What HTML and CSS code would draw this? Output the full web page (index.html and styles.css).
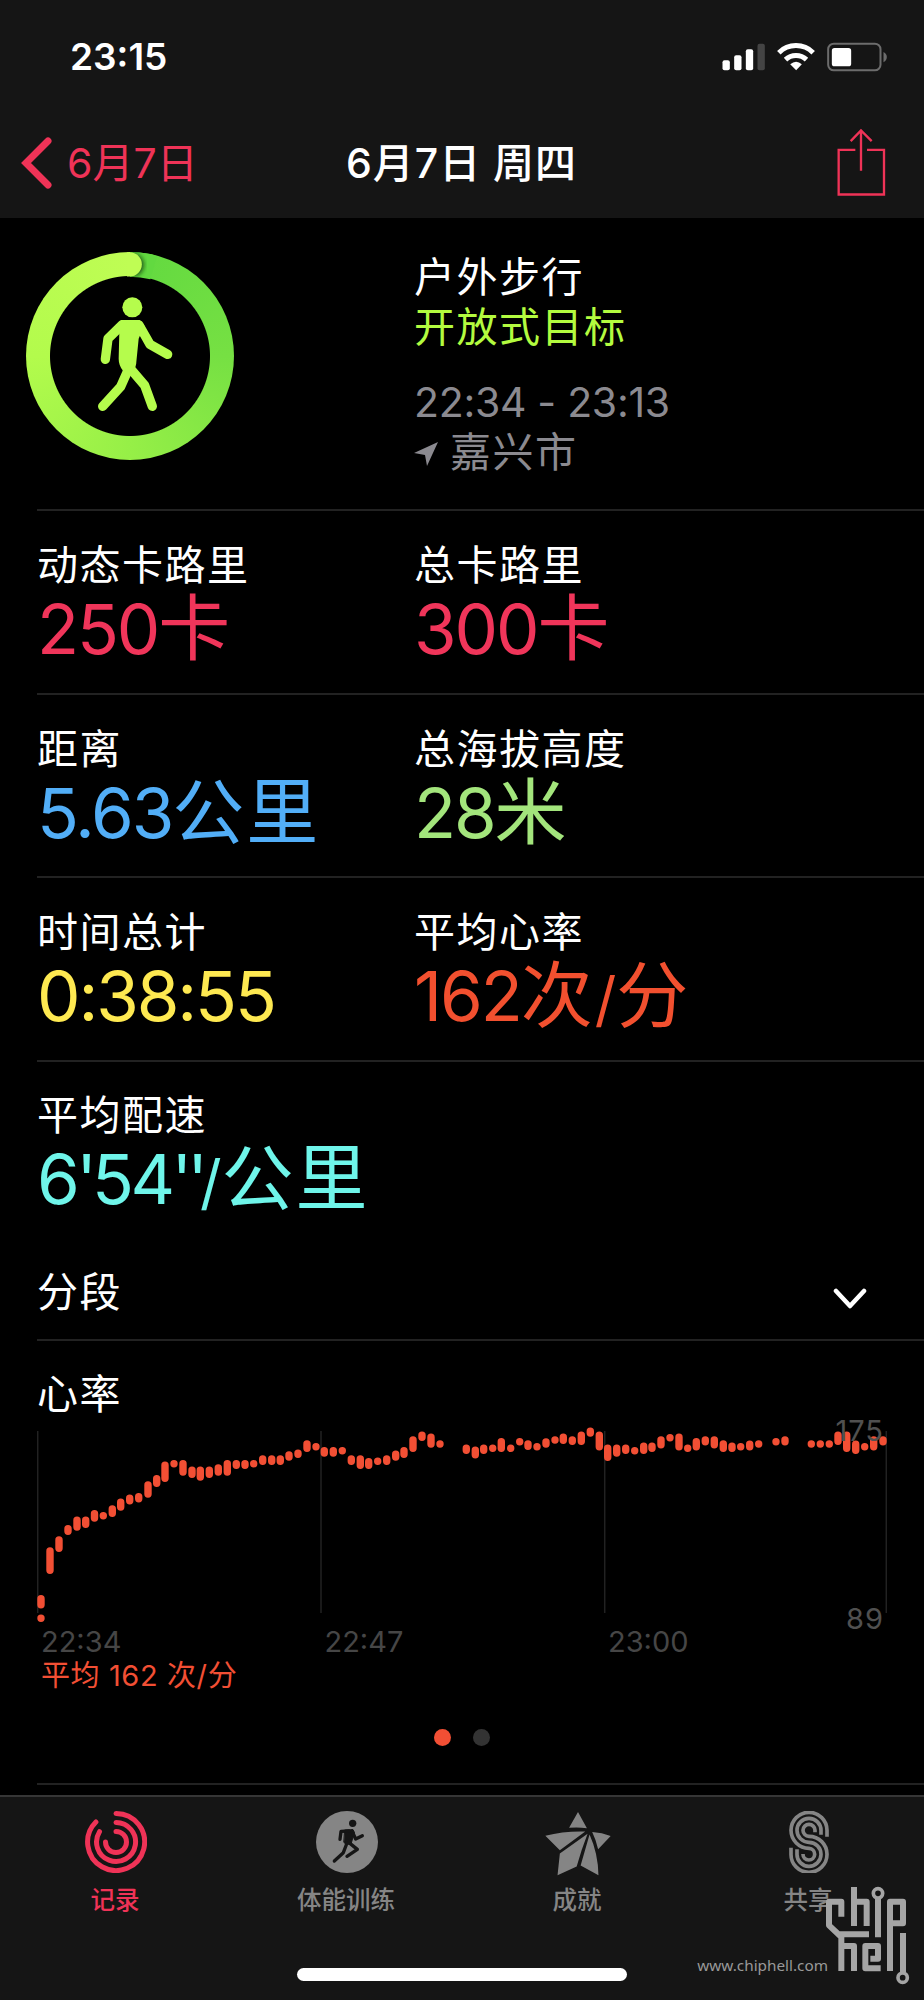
FILE: index.html
```
<!DOCTYPE html>
<html lang="zh-CN">
<head>
    <meta charset="UTF-8">
    <meta name="viewport" content="width=device-width, initial-scale=1.0">
    <title>6月7日 周四</title>
    <link rel="stylesheet" href="styles.css">
</head>
<body>
    <header class="header">
        <div class="status">
            <span class="clock">23:15</span>
            <svg class="status-icons" viewBox="780 125 500 90">
                <g fill="#fff">
                    <rect x="784" y="180" width="22" height="30" rx="6"/>
                    <rect x="819" y="165" width="22" height="45" rx="6"/>
                    <rect x="854" y="147" width="22" height="63" rx="6"/>
                    <rect x="889" y="130" width="22" height="80" rx="6" fill="#444"/>
                    <path d="M1005 210 L987 192 Q1005 177 1022 192 Z"/>
                    <rect x="1112" y="143" width="58" height="55" rx="8"/>
                </g>
                <path d="M953 157 A73 73 0 0 1 1056 157 M973 178 A46 46 0 0 1 1036 178" fill="none" stroke="#fff" stroke-width="15"/>
                <rect x="1101" y="130" width="157" height="80" rx="17" fill="none" stroke="#6c6c6c" stroke-width="6"/>
                <path d="M1267 155 Q1277 161 1277 170 Q1277 180 1267 186 Z" fill="#6c6c6c"/>
            </svg>
        </div>
        <nav class="nav">
            <a class="back">
                <svg class="back-icon" viewBox="0 0 32 54"><path d="M27 5 L5 27 L27 49"/></svg>
                <span>6月7日</span>
            </a>
            <h1 class="title">6月7日 周四</h1>
            <svg class="share" viewBox="1122 385 150 206">
                <path d="M1180 450 H1130 V584 H1266 V450 H1215 M1197 513 V392 M1166 424 L1197 392 L1229 424"/>
            </svg>
        </nav>
    </header>

    <main class="content">
        <section class="hero">
            <div class="ring">
                <svg class="ring-art" viewBox="77 80 624 624">
                    <defs>
                        <clipPath id="band"><path d="M389 80 H480 V180 L389 153 Z"/></clipPath>
                        <filter id="soft"><feGaussianBlur stdDeviation="6"/></filter>
                    </defs>
                    <path d="M389 81 Q440 81 470 92 L450 162 Q420 154 389 154 Z" fill="#62d940"/>
                    <g clip-path="url(#band)"><circle cx="396" cy="119" r="35" fill="#123c0c" opacity=".8" filter="url(#soft)"/></g>
                    <path d="M380 80.500 H388 A36.500 36.500 0 0 1 388 153.500 H380 Z" fill="#bffd54"/>
                    <g fill="#b5fc4c">
                        <circle cx="396" cy="246" r="30"/>
                        <path d="M362 284 H418 L432 300 L415 340 L408 410 Q408 425 398 436 H368 Q355 420 355 400 L357 320 Z"/>
                    </g>
                    <g class="limbs">
                        <path d="M366 298 L323 340 L315 402"/>
                        <path d="M416 299 L449 357 L502 387"/>
                        <path d="M384 432 L361 484 L307 543"/>
                        <path d="M390 430 L433 480 L456 543"/>
                    </g>
                </svg>
            </div>
            <div class="summary">
                <p>户外步行</p>
                <p class="goal">开放式目标</p>
                <p class="muted time">22:34 - 23:13</p>
                <p class="muted place">
                    <svg class="arrow" viewBox="0 0 24 24"><path d="M24 0 L0 11 L11 13 L13 24 Z"/></svg>
                    <span>嘉兴市</span>
                </p>
            </div>
        </section>

        <section class="row">
            <div class="stat pink"><h2>动态卡路里</h2><p><b>250</b>卡</p></div>
            <div class="stat pink"><h2>总卡路里</h2><p><b>300</b>卡</p></div>
        </section>
        <section class="row">
            <div class="stat blue"><h2>距离</h2><p><b>5.63</b>公里</p></div>
            <div class="stat green"><h2>总海拔高度</h2><p><b>28</b>米</p></div>
        </section>
        <section class="row">
            <div class="stat yellow"><h2>时间总计</h2><p><b>0:38:55</b></p></div>
            <div class="stat orange"><h2>平均心率</h2><p><b>162</b>次<b class="slash">/</b>分</p></div>
        </section>
        <section class="row last">
            <div class="stat cyan"><h2>平均配速</h2><p><b>6<b class="prime">'</b>54<b class="prime">''</b></b><b class="slash">/</b>公里</p></div>
        </section>

        <section class="segments">
            <h2>分段</h2>
            <svg class="chevron" viewBox="0 0 34 22"><path d="M3 3 L17 18 L31 3"/></svg>
        </section>

        <section class="heart">
            <h2>心率</h2>
            <div class="chart">
                <svg class="plot" viewBox="37 1410 850 220">
                    <path class="grid" d="M37.700 1431 V1613 M321 1431 V1613 M604.700 1431 V1613 M886.300 1431 V1613"/>
                    <g transform="translate(0 1410)">
                        <path class="bars" d="M41 188.700V194.700M41 208.300h0M50 141V160.300M59 130V138.300M68 118.700V121.300M77 110.300V117M85.700 110.300V114.300M94.500 103.700V108M103.300 105.700h0M112.300 99V103.300M120.700 92.300V97M129.700 88.300V90.700M138.700 86.700V88.700M148 75V84M156.700 68.700V73.300M165 55.300V68.300M174 53.700h0M183 53.700V62M192 60.300V64.300M200.300 60.300V67M209.300 60.300V64.300M218.300 58V62M227.300 53.700V62M236.300 53.700V55.300M245 53.700V55.300M253.700 53.700h0M262.700 49V51.300M271.700 49V51.300M280.300 49V51.300M289 45V47M298 43.300V44.300M307 34V38.300M316 36.700h0
                        M324.300 40.700V43M333.300 40.700V43M342.300 40.700h0M351.300 49V51.300M360.300 49V55.300M368.700 51.700V55.300M377.700 51.300h0M386.700 49V51.300M395.700 44.300V47M404 40.700V44.300M413 30V38.300M422 25.300V27.300M431 27.300V34M440 34h0M466.300 38.300V40.300M475.300 40.300V44.700M483.700 38.300V40.300M492.700 38.300h0M501.300 31.700V38.300M510.700 38.300h0M519.700 31.700h0M528 34V36.300M537 36.700h0M546 32V34M555 30h0M563.300 27.300V30.300M572.300 30V31.300M581.300 25.300V31.300M590.300 21.300V23M599.300 25.300V36.700M607.700 38.300V47.300M616.700 38.300V43M625.700 38.300V40.300
                        M634.700 40.700h0M643.700 36.300V40.300M652 36.300V38.300M661 30V34.700M670 27.700h0M679 27.300V36.700M687.700 38.300h0M696.300 31.700V36.700M705.300 30V31.700M714.300 30V34.700M723.300 34V38.300M732 36.300V38.300M740.700 36.700h0M749.700 34.300V36.700M758.700 34h0M776 31.700h0M785 30V31.700M811.300 34h0M820.300 34h0M829.300 34h0M838 25.300V31.300M846.700 25.300V38.300M855.700 34.300V40.300M864.700 36.700h0M873.700 30V36.700M883 30V31.700"/>
                    </g>
                </svg>
                <span class="y-label max">175</span>
                <span class="y-label min">89</span>
            </div>
            <div class="x-axis"><span>22:34</span><span>22:47</span><span>23:00</span></div>
            <p class="average">平均 162 次/分</p>
            <div class="pager"><i class="on"></i><i></i></div>
        </section>
    </main>

    <footer class="tabbar">
        <div class="tabs">
            <a class="tab active">
                <svg viewBox="0 0 62 62"><path class="line" d="M31 2.500 A28.500 28.500 0 1 1 10.900 10.900 M31 11.500 A19.500 19.500 0 1 1 14.500 20.700 M31 20.500 A10.500 10.500 0 1 1 20.500 31"/></svg>
                <span>记录</span>
            </a>
            <a class="tab">
                <svg viewBox="947 94 186 186">
                    <circle cx="1040" cy="187" r="93"/>
                    <g class="runner">
                        <circle cx="1057" cy="131" r="11"/>
                        <path class="body" d="M1034 151 L1058 150 L1062 158 L1053 190 L1038 196 L1031 188 Z"/>
                        <path d="M1046 154 L1022 155 L1019 179 M1055 154 L1066 178 L1086 168 M1040 190 L1029 219 L1002 244 M1045 188 L1071 209 L1040 230"/>
                    </g>
                </svg>
                <span>体能训练</span>
            </a>
            <a class="tab">
                <svg class="star" viewBox="130 92 204 200">
                    <path d="M232 95 L205 143 Q233 141 259 144 Z M133 167 Q190 152 254 154 L177 211 Z M261 161 Q243 207 228 260 L170 287 L177 221 Z M267 163 L240 257 L294 287 Q293 220 267 163 Z M275 156 Q305 158 331 168 L293 208 Q287 181 275 156 Z"/>
                </svg>
                <span>成就</span>
            </a>
            <a class="tab">
                <svg viewBox="832 94 186 186">
                    <path class="line thick" d="M979 171 V152 A54 54 0 1 0 871 152 C871 181 895 206 925 206 A17.500 17.500 0 1 1 907 223 M961 165 V152 A36 36 0 1 0 889 152 A36 36 0 0 0 925 188 A36 36 0 1 1 889 223 V209 M943 158 V152 A18 18 0 1 0 925 170 A54 54 0 1 1 871 223 V204"/>
                </svg>
                <span>共享</span>
            </a>
        </div>
        <div class="home-bar"></div>
        <div class="watermark">
            <span>www.chiphell.com</span>
            <svg viewBox="978 318 255 297">
                <path d="M1027 410 V365 H990 V436 L1027 471 V573 M1020 463 H1110 M1027 498 H1065 V573 M1065 321 V438 M1065 365 H1103 V438 M1137 356 V472 M1173 573 V365 H1212 V430 H1173 M1145 565 H1099 V498 H1137 V536 H1114 M1212 459 V578"/>
                <circle cx="1137" cy="340" r="14"/>
                <circle cx="1211" cy="593" r="14"/>
            </svg>
        </div>
    </footer>
</body>
</html>
```
FILE: styles.css
```
* {
    box-sizing: border-box;
    margin: 0;
    padding: 0;
}
body {
    width: 924px;
    height: 2000px;
    display: flex;
    flex-direction: column;
    overflow: hidden;
    background: #000;
    color: #fff;
    font-family: Inter, "Noto Sans CJK SC", sans-serif;
    font-size: 41px;
}
svg {
    display: block;
    fill: none;
}
h1, h2, b {
    font-weight: 400;
}

/* header */
.header {
    height: 218px;
    background: #151515;
}
.status {
    height: 113px;
    padding: 0 36px 0 70px;
    display: flex;
    justify-content: space-between;
    align-items: center;
}
.clock {
    font-size: 37px;
    font-weight: 600;
}
.status-icons {
    width: 167px;
    height: 30px;
}
.nav {
    height: 100px;
    padding: 0 38px 0 21px;
    display: grid;
    grid-template-columns: 1fr auto 1fr;
    align-items: center;
}
.back {
    display: flex;
    align-items: center;
    gap: 14px;
    color: #ef3357;
}
.back span, .title {
    padding-bottom: 6px;
}
.back-icon {
    width: 32px;
    height: 54px;
    stroke: #ef3357;
    stroke-width: 7;
    stroke-linecap: round;
}
.title {
    font-size: 41px;
    font-weight: 500;
    letter-spacing: 1px;
    transform: translateX(8px);
}
.share {
    justify-self: end;
    width: 50px;
    height: 69px;
    margin-top: -2px;
    stroke: #ef3357;
    stroke-width: 7;
}

/* workout summary */
.content {
    height: 1577px;
    padding-left: 37px;
}
.hero {
    height: 293px;
    display: grid;
    grid-template-columns: 377px 1fr;
    border-bottom: 2px solid #222;
}
.ring {
    width: 208px;
    height: 208px;
    margin: 34px 0 0 -11px;
    border-radius: 50%;
    background: radial-gradient(closest-side, #000 79.500px, transparent 80.500px),
        conic-gradient(#62d940, #76e043 25%, #96ef47 50%, #b3fb4c 75%, #bffd54);
}
.ring-art {
    width: 208px;
    height: 208px;
}
.limbs {
    stroke: #b5fc4c;
    stroke-width: 28;
    stroke-linecap: round;
    stroke-linejoin: round;
}
.summary {
    padding-top: 34px;
    line-height: 50px;
    letter-spacing: 1.500px;
}
.goal {
    color: #b3fb3f;
}
.muted {
    color: #8b8a90;
}
.time {
    margin-top: 25px;
    letter-spacing: -.300px;
}
.place {
    display: flex;
    align-items: center;
    gap: 12px;
}
.arrow {
    width: 24px;
    height: 24px;
    margin-top: 3px;
    fill: #8b8a90;
}

/* stats */
.row {
    height: 183.500px;
    padding-top: 28px;
    display: grid;
    grid-template-columns: 377px 1fr;
    border-bottom: 2px solid #222;
}
.row.last {
    padding-top: 27px;
    border-bottom: none;
}
.stat h2, .segments h2, .heart h2 {
    font-size: 41px;
    line-height: 52px;
    letter-spacing: 1.500px;
}
.stat p {
    height: 74px;
    font-size: 72px;
    line-height: 74px;
    letter-spacing: 2px;
    white-space: nowrap;
}
.stat b {
    font-size: 69px;
    letter-spacing: -2.100px;
}
.stat .prime {
    letter-spacing: -5px;
}
.stat .slash {
    font-size: 60px;
    letter-spacing: 0;
}
.pink p { color: #f0355a; }
.blue p { color: #52aef7; }
.green p { color: #a3e57c; }
.yellow p { color: #fee951; }
.orange p { color: #f2502f; }
.cyan p { color: #6ff5ea; }
.cyan b {
    letter-spacing: -3.500px;
}
.cyan .slash {
    margin-left: -3px;
}

/* segments */
.segments {
    height: 96px;
    padding-right: 57px;
    display: flex;
    justify-content: space-between;
    align-items: center;
    border-bottom: 2px solid #222;
}
.chevron {
    width: 34px;
    height: 22px;
    margin-top: 13px;
    stroke: #fff;
    stroke-width: 4.500;
    stroke-linecap: round;
    stroke-linejoin: round;
}

/* heart rate */
.heart {
    height: 444px;
    padding-top: 27px;
    border-bottom: 2px solid #222;
}
.chart {
    position: relative;
    display: flow-root;
    height: 206px;
}
.plot {
    width: 850px;
    height: 220px;
    margin-top: -10px;
}
.grid {
    stroke: #222;
    stroke-width: 1.500;
}
.bars {
    stroke: #f24f34;
    stroke-width: 7.400;
    stroke-linecap: round;
}
.y-label {
    position: absolute;
    right: 40px;
    font-size: 29px;
    line-height: 30px;
    letter-spacing: 1px;
    color: #505050;
}
.max { top: -4px; }
.min { top: 184px; }
.x-axis {
    padding-left: 4px;
    display: grid;
    grid-template-columns: 283.500px 283.500px 1fr;
    font-size: 29px;
    line-height: 31px;
    color: #464646;
}
.average {
    padding-left: 4px;
    font-size: 29px;
    line-height: 37px;
    letter-spacing: .600px;
    color: #f24f34;
}
.pager {
    margin: 35px 37px 0 0;
    padding-right: 1px;
    display: flex;
    justify-content: center;
    gap: 22px;
}
.pager i {
    width: 17px;
    height: 17px;
    border-radius: 50%;
    background: #333;
}
.pager .on {
    background: #f24f34;
}

/* tab bar */
.tabbar {
    position: relative;
    height: 205px;
    border-top: 2px solid #363636;
    background: #151515;
}
.tabs {
    height: 171px;
    padding-top: 14px;
    display: grid;
    grid-template-columns: repeat(4, 1fr);
}
.tab {
    display: flex;
    flex-direction: column;
    align-items: center;
    font-size: 24.500px;
    font-weight: 500;
    line-height: 30px;
    color: #858585;
}
.tab span {
    margin-left: -1px;
}
.tab svg {
    width: 62px;
    height: 62px;
    margin-bottom: 12px;
    fill: currentColor;
}
.tab .star {
    width: 68px;
    height: 66px;
    margin-bottom: 8px;
}
.tab.active {
    color: #ef3357;
}
.tab .line {
    fill: none;
    stroke: currentColor;
    stroke-width: 5;
    stroke-linecap: round;
}
.tab .thick {
    stroke-width: 11;
    stroke-linecap: butt;
}
.runner {
    fill: #151515;
}
.runner path {
    fill: none;
    stroke: #151515;
    stroke-width: 10;
    stroke-linecap: round;
    stroke-linejoin: round;
}
.runner .body {
    fill: #151515;
    stroke-width: 3;
}
.home-bar {
    width: 330px;
    height: 13px;
    margin: 0 auto;
    border-radius: 7px;
    background: #fff;
}
.watermark {
    position: absolute;
    right: 14px;
    bottom: 15px;
    display: flex;
    align-items: flex-end;
    font-family: "Noto Sans", sans-serif;
    font-size: 15.300px;
    color: #999;
}
.watermark span {
    line-height: 20px;
    padding-bottom: 10px;
}
.watermark svg {
    width: 85px;
    height: 99px;
    margin-left: -3px;
    stroke: #a5a5a5;
    stroke-width: 18;
    stroke-linejoin: round;
}
.watermark circle {
    stroke-width: 11;
}
```
